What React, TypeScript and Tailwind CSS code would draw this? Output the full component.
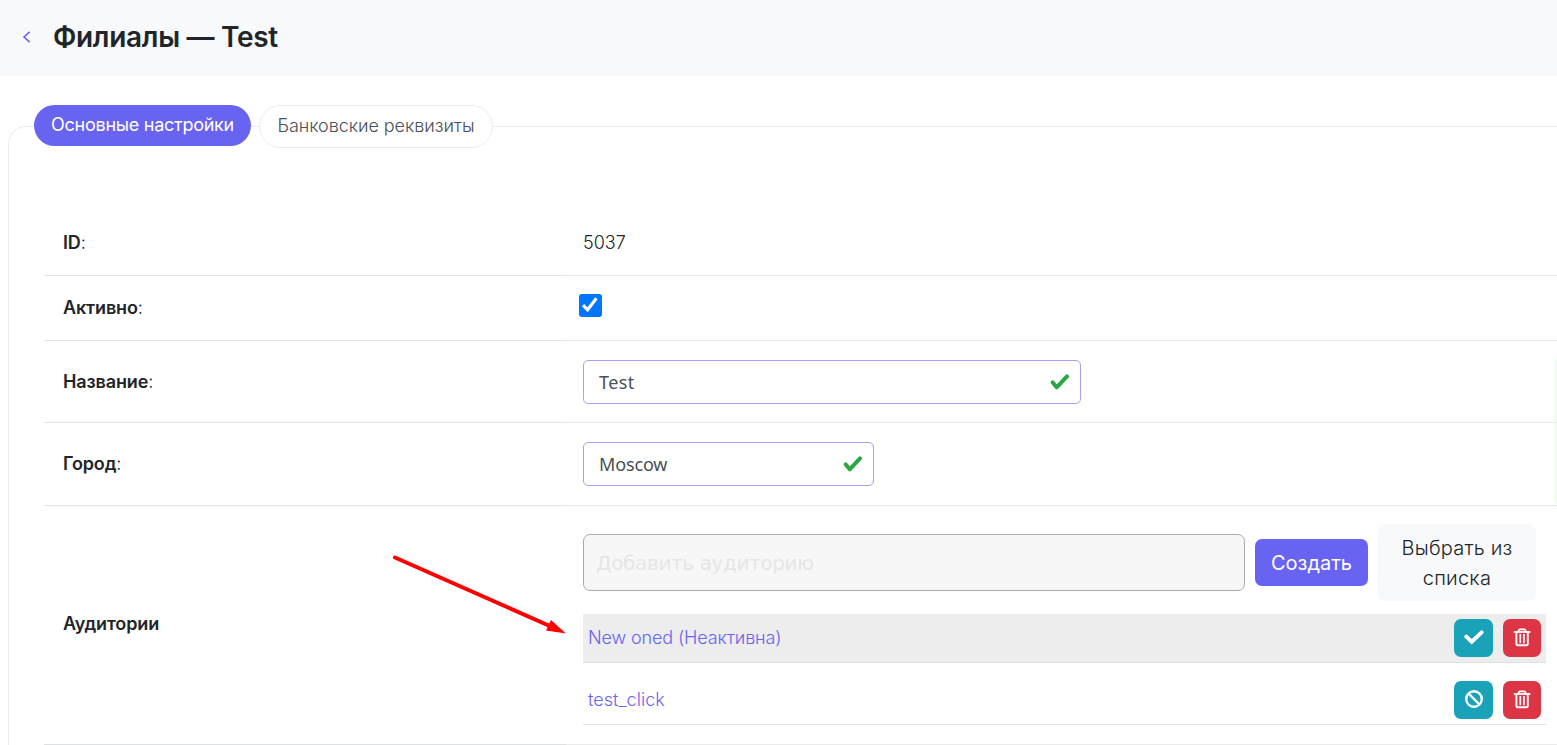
import type { ReactNode } from "react";

function CheckMark() {
  return (
    <svg className="h-[16px] w-[20px] text-[#28a745]" viewBox="0 0 20 16" fill="none" stroke="currentColor" strokeWidth="4" strokeLinecap="round" strokeLinejoin="round" aria-hidden="true">
      <path d="m2.7 8.4 4 4.9L17 2.4" />
    </svg>
  );
}

function BoldCheck() {
  return (
    <svg className="h-[15px] w-[20px]" viewBox="0 0 20 15" fill="none" stroke="white" strokeWidth="3.9" aria-hidden="true">
      <path d="m2.3 6.6 5.4 5.1L17.6 2.3" strokeLinecap="round" />
    </svg>
  );
}

function TrashIcon() {
  return (
    <svg className="h-[19px] w-[18px]" viewBox="0 0 18 19" fill="none" stroke="white" aria-hidden="true">
      <path d="M.8 4h16.6" strokeWidth="1.8" />
      <path d="M5 3.7 6 1.9q.3-.5.9-.5h4.4q.6 0 .9.5l1 1.8" strokeWidth="1.7" />
      <path d="M3.4 4.5V16q0 1.3 1.3 1.3h8.8q1.3 0 1.3-1.3V4.5" strokeWidth="1.9" />
      <path d="M7.3 6v9.2M10.9 6v9.2" strokeWidth="1.7" />
    </svg>
  );
}

function BanIcon() {
  return (
    <svg className="h-[18px] w-[18px]" viewBox="0 0 18 18" fill="none" stroke="white" strokeWidth="2.4" aria-hidden="true">
      <circle cx="9" cy="9" r="7.8" />
      <path d="m3.5 3.5 11 11" />
    </svg>
  );
}

function Row({ label, colon = true, height, pad = "pb-px", first = false, children }: {
  label: string;
  colon?: boolean;
  height: string;
  pad?: string;
  first?: boolean;
  children: ReactNode;
}) {
  return (
    <div className={`flex ${height}`}>
      <div className={`flex w-[522px] shrink-0 items-center border-t pl-[19px] ${pad} ${first ? "border-transparent" : "border-[#e0e1e2]"}`}>
        <span><b className="font-semibold tracking-[-0.13px]">{label}</b><span className="font-light">{colon ? ":" : ""}</span></span>
      </div>
      <div className={`flex-1 border-t pl-[17px] ${first ? "border-transparent" : "border-[#ebebec]"}`}>{children}</div>
    </div>
  );
}

function Field({ value, width, tracking }: { value: string; width: string; tracking: string }) {
  return (
    <div className={`mt-[19px] flex h-[44px] items-center justify-between rounded-[5px] border border-[#a99ff5] pr-[10px] pl-[15px] text-[#495057] ${width}`}>
      <span className={`font-['Noto_Sans'] text-[18px] ${tracking}`}>{value}</span>
      <CheckMark />
    </div>
  );
}

function Room({ name, active, tracking }: { name: string; active: boolean; tracking: string }) {
  return (
    <div className={`flex h-[49px] w-[963px] items-start border-b border-[#e0e1e2] px-[5px] pt-[5px] ${active ? "" : "bg-[#ededed]"}`}>
      <a className={`mt-[5px] flex-1 leading-[27px] text-[#6963f1] ${tracking}`}>{name}</a>
      <div className="flex gap-[10px]">
        <button className="flex h-[38px] w-[39px] items-center justify-center rounded-[7px] bg-[#19a2b8] pb-[2px] pl-px">
          {active ? <BanIcon /> : <BoldCheck />}
        </button>
        <button className="flex h-[38px] w-[38px] items-center justify-center rounded-[7px] bg-[#dc3545] pb-px">
          <TrashIcon />
        </button>
      </div>
    </div>
  );
}

export default function App() {
  return (
    <div className="relative h-[745px] w-[1557px] overflow-hidden bg-white font-['Inter',sans-serif] text-[18px] text-[#212529]">
      <header className="flex h-[76px] items-center bg-[#f8f9fb] pl-[22px]">
        <svg className="mt-[-2px] h-[12px] w-[9px]" viewBox="0 0 9 12" fill="none" stroke="#6963f1" strokeWidth="1.6" aria-hidden="true">
          <path d="M7.7.8 2 6l5.7 5.2" />
        </svg>
        <h1 className="-mt-[2px] ml-[22px] text-[28px] leading-[34px] font-semibold tracking-[-0.3px]">Филиалы — Test</h1>
      </header>

      <main className="mt-[50px] ml-[8px] h-[640px] rounded-tl-[18px] border-t border-l border-[#ebecf3]">
        <nav className="-mt-[22px] ml-[25px] flex items-start gap-[8px]">
          <button className="h-[41px] w-[217px] rounded-full bg-[#6963f1] pb-[2px] tracking-[-0.27px] text-white">Основные настройки</button>
          <button className="h-[43px] w-[234px] rounded-full border border-[#ebecf3] bg-white pb-[2px] font-light tracking-[-0.06px] text-[#495057]">Банковские реквизиты</button>
        </nav>

        <section className="mt-[62px] ml-[35px]">
          <Row label="ID" height="h-[65px]" pad="pb-[2px]" first>
            <div className="mt-[18px] leading-[27px] font-light">5037</div>
          </Row>
          <Row label="Активно" height="h-[65px]" pad="pb-[2px]">
            <div className="mt-[18px] -ml-[4px] flex h-[22.5px] w-[22.5px] items-center justify-center rounded-[3px] bg-[#0075ff]">
              <svg className="h-[18px] w-[18px]" viewBox="0 0 18 18" fill="none" stroke="white" strokeWidth="3.2" aria-hidden="true">
                <path d="m2 9.2 4.6 4.6L15.4 2.2" />
              </svg>
            </div>
          </Row>
          <Row label="Название" height="h-[82px]" pad="">
            <Field value="Test" width="w-[498px]" tracking="tracking-[0.4px]" />
          </Row>
          <Row label="Город" height="h-[83px]" pad="pb-[2px]">
            <Field value="Moscow" width="w-[291px]" tracking="tracking-[-0.15px]" />
          </Row>
          <Row label="Аудитории" colon={false} height="h-[239px]" pad="pb-[4px]">
            <div className="mt-[18px] flex h-[77px] items-center gap-[10px]">
              <div className="flex h-[57px] w-[662px] items-center rounded-[7px] border border-[#aaa] bg-[#f7f7f7] pt-px pl-[12px] font-['DejaVu_Sans'] text-[20px] tracking-[-0.37px] text-[#e6e6e7]">Добавить аудиторию</div>
              <button className="h-[47px] w-[113px] rounded-[7px] bg-[#6963f1] text-[20px] text-white">Создать</button>
              <button className="h-[77px] w-[158px] rounded-[7px] bg-[#f8f9fb] text-[20px] leading-[30px] font-light tracking-[0.2px]">Выбрать из<br />списка</button>
            </div>
            <div className="mt-[13px] flex flex-col gap-[13px] font-light">
              <Room name="New oned (Неактивна)" active={false} tracking="tracking-[-0.13px]" />
              <Room name="test_click" active tracking="tracking-[0.05px]" />
            </div>
          </Row>
          <Row label="" colon={false} height="h-[20px]">{null}</Row>
        </section>
      </main>

      <svg className="absolute top-[550px] left-[385px] h-[90px] w-[190px]" viewBox="385 550 190 90" aria-hidden="true">
        <path d="M395 557.5 552 627" stroke="#ff0000" strokeWidth="4" strokeLinecap="round" />
        <path d="m566 633.5-15-13.5-5 10.5z" fill="#ff0000" />
      </svg>
      <div className="absolute top-[358px] left-[1558px] h-[146px] w-[8px] shadow-[0_0_6px_0px_#c4f8c0]" />
    </div>
  );
}
